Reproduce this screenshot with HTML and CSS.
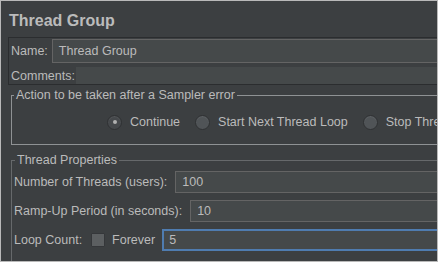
FILE: index.html
```html
<!DOCTYPE html>
<html lang="en">
<head>
  <meta charset="UTF-8" />
  <title>Thread Group</title>
  <link rel="stylesheet" href="styles.css">
</head>
<body>
  <div class="frame">
    <div class="title">Thread Group</div>

    <div class="name-panel">
      <div class="row">
        <label class="lbl">Name:</label>
        <div class="field">Thread Group</div>
      </div>
      <div class="row comments-row">
        <label class="lbl">Comments:</label>
        <div class="comments"></div>
      </div>
    </div>

    <fieldset class="group group-error">
      <legend>Action to be taken after a Sampler error</legend>
      <div class="radios">
        <span class="radio-item"><span class="radio checked"></span>Continue</span>
        <span class="radio-item"><span class="radio"></span>Start Next Thread Loop</span>
        <span class="radio-item"><span class="radio"></span>Stop Thread</span>
      </div>
    </fieldset>

    <fieldset class="group group-props">
      <legend>Thread Properties</legend>
      <div class="prop-row">
        <label class="lbl">Number of Threads (users):</label>
        <div class="field">100</div>
      </div>
      <div class="prop-row">
        <label class="lbl">Ramp-Up Period (in seconds):</label>
        <div class="field">10</div>
      </div>
      <div class="prop-row loop-row">
        <label class="lbl">Loop Count:</label>
        <span class="check"></span>
        <span class="lbl forever">Forever</span>
        <div class="field focused">5</div>
      </div>
    </fieldset>
  </div>
</body>
</html>
```

FILE: styles.css
```css
*{box-sizing:border-box;margin:0;padding:0;}
body{background:#3c3f41;font-family:"Liberation Sans",Arial,sans-serif;font-size:12.5px;color:#bbbbbb;}
.frame{width:438px;height:262px;border:1px solid #b9b9b9;background:#3c3f41;overflow:hidden;}

.title{height:36px;padding:11px 0 0 8px;font-size:16px;line-height:18px;font-weight:bold;color:#bbbbbb;}

.name-panel{margin:0 -40px 0 7px;height:48px;border:1px solid #2b2d2f;padding:1px 0 0 2px;}
.row{display:flex;align-items:center;height:24px;}
.row .lbl{margin-right:4px;line-height:14px;}
.field{flex:1;height:24px;line-height:22px;padding-left:6px;background:#45494a;border:1px solid #646464;color:#bbbbbb;}
.comments-row{margin-top:4px;height:17px;}
.comments-row .lbl{margin-right:1px;}
.comments{flex:1;height:17px;background:#45494a;}

.group{margin:3px -40px 0 10px;border:1px solid #8f9294;padding:0 2px;}
.group legend{padding:0 2px;line-height:14px;margin-left:0;color:#bbbbbb;}

.group-error{height:57px;padding-top:12px;}
.radios{display:flex;align-items:center;height:16px;padding-left:93px;white-space:nowrap;}
.radio-item{display:flex;align-items:center;margin-right:15px;}
.radio{width:15px;height:15px;border-radius:50%;margin-right:8px;background:#505457;border:1px solid #2f3133;box-shadow:inset 0 1px 1px rgba(255,255,255,.08);display:flex;align-items:center;justify-content:center;}
.radio.checked{background:#45484b;}
.radio.checked::after{content:"";width:4px;height:4px;border-radius:50%;background:#b0b0b0;}

.group-props{margin-top:8px;height:120px;border-color:#66696b;padding-top:4px;}
.group-props legend{margin-left:1px;}
.prop-row{display:flex;align-items:center;height:22px;margin-bottom:7px;}
.prop-row .lbl{margin-right:8px;white-space:nowrap;}
.prop-row .field{height:22px;line-height:20px;}
.check{width:14px;height:14px;margin:0 7px 0 1px;background:#5c5f61;border:1px solid #35373a;border-radius:1px;}
.loop-row .forever{margin-right:7px;}
.field.focused{border:2px solid #4f7cb0;line-height:18px;padding-left:5px;}
```
